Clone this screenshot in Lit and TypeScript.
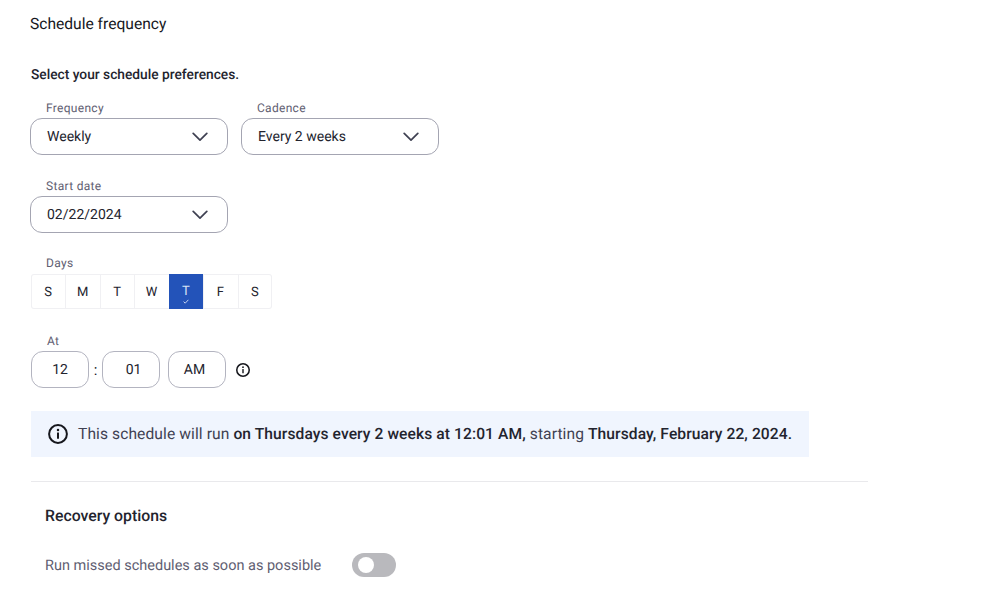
import { LitElement, html, css } from "lit";
import { customElement } from "lit/decorators.js";

const chevron = html`<svg class="chev" width="16" height="10" viewBox="0 0 16 10"><path d="M1.2 1.4 8 8.2l6.8-6.8" fill="none" stroke="#3f4152" stroke-width="1.7" stroke-linecap="round" stroke-linejoin="round"/></svg>`;
const info = (s: number, w: number) => html`<svg width=${s} height=${s} viewBox="0 0 20 20"><circle cx="10" cy="10" r="8.9" fill="none" stroke="#16171d" stroke-width=${w}/><circle cx="10" cy="5.9" r="1.25" fill="#16171d"/><rect x="9" y="8.4" width="2" height="6.4" rx=".4" fill="#16171d"/></svg>`;

@customElement("app-root")
export class AppRoot extends LitElement {
  static styles = css`
    :host { display: block; width: 987px; height: 600px; overflow: hidden; background: #fff; font-family: Roboto, "Liberation Sans", sans-serif; color: #16171d; box-sizing: border-box; padding: 14px 0 0 30px; text-rendering: geometricPrecision; }
    h2 { margin: 0; font-size: 15.6px; font-weight: 400; line-height: 20px; }
    .intro { margin: 31px 0 0 1px; font-size: 13.75px; font-weight: 500; line-height: 20px; color: #23242e; }
    .row { display: flex; gap: 13px; margin-top: 16px; }
    .row.second { margin-top: 24px; }
    .lab { font-size: 12px; line-height: 15px; color: #5f6072; letter-spacing: .3px; margin: 0 0 2px 16px; }
    .select { width: 198px; height: 37px; box-sizing: border-box; border: 1px solid #a4a5b2; border-radius: 12px; display: flex; align-items: center; justify-content: space-between; padding: 0 19px 0 16px; font-size: 14px; color: #23242e; }
    .days-lab { margin: 23px 0 4px 16px; }
    .days { display: flex; margin-left: 1px; margin-top: -1px; width: 241px; height: 35px; box-sizing: border-box; box-shadow: inset 0 0 0 1px #f0f0f3; border-radius: 3px; }
    .day { flex: 1; min-width: 0; display: flex; align-items: center; justify-content: center; position: relative; font-size: 13px; padding-top: 1px; box-sizing: border-box; box-shadow: inset 1px 0 0 #f0f0f3; color: #23242e; }
    .day:first-child { box-shadow: none; }
    .day.on { background: #2353b9; color: #d8e2f5; box-shadow: none; padding-top: 0; padding-bottom: 1px; }
    .day svg { position: absolute; left: 50%; bottom: 5px; margin-left: -3px; }
    .at-lab { margin: 25px 0 2px 17px; }
    .time { display: flex; align-items: center; margin-left: 1px; }
    .box { width: 58px; height: 37px; box-sizing: border-box; border: 1.5px solid #b3b4c0; border-radius: 12px; display: flex; align-items: center; justify-content: center; font-size: 14px; color: #23242e; }
    .box.right { padding-left: 5px; }
    .box.left { padding-right: 5px; }
    .colon { width: 13px; text-align: center; font-size: 15px; }
    .gap { width: 8px; }
    .tip { display: flex; margin-left: 10px; }
    .banner { display: flex; align-items: center; gap: 10px; margin: 23px 0 0 1px; width: 778px; height: 46px; box-sizing: border-box; padding-left: 17px; background: #f0f5fe; font-size: 15.6px; letter-spacing: .09px; color: #3f4152; white-space: nowrap; }
    .banner b { font-weight: 500; color: #23242e; }
    hr { margin: 24px 0 0 1px; width: 837px; height: 1px; border: 0; background: #e9e9ec; }
    h3 { margin: 24px 0 0 15px; font-size: 15.8px; font-weight: 500; line-height: 20px; color: #23242e; }
    .opt { display: flex; align-items: center; margin: 27px 0 0 15px; font-size: 14.5px; color: #5f6072; height: 24px; }
    .opt span { width: 307px; }
    .toggle { width: 44px; height: 24px; border-radius: 12px; background: #b9b9bd; display: flex; align-items: center; padding-left: 6px; box-sizing: border-box; }
    .knob { width: 16px; height: 16px; border-radius: 50%; background: #fff; }
  `;

  render() {
    const days = ["S", "M", "T", "W", "T", "F", "S"];
    return html`
      <h2>Schedule frequency</h2>
      <p class="intro">Select your schedule preferences.</p>
      <div class="row">
        <div><div class="lab">Frequency</div><div class="select">Weekly ${chevron}</div></div>
        <div><div class="lab">Cadence</div><div class="select">Every 2 weeks ${chevron}</div></div>
      </div>
      <div class="row second">
        <div><div class="lab">Start date</div><div class="select">02/22/2024 ${chevron}</div></div>
      </div>
      <div class="lab days-lab">Days</div>
      <div class="days">
        ${days.map((d, i) => html`<div class="day ${i === 4 ? "on" : ""}">${d}${i === 4 ? html`<svg width="6" height="5" viewBox="0 0 6 5"><path d="M.6 2.6 2.2 4.2 5.4.8" fill="none" stroke="#d8e2f5" stroke-width=".9"/></svg>` : ""}</div>`)}
      </div>
      <div class="lab at-lab">At</div>
      <div class="time">
        <div class="box">12</div><div class="colon">:</div><div class="box right">01</div><div class="gap"></div><div class="box left">AM</div>
        <div class="tip">${info(14, 2.2)}</div>
      </div>
      <div class="banner">${info(20, 2)}<div>This schedule will run <b>on Thursdays every 2 weeks at 12:01 AM,</b> starting <b>Thursday, February 22, 2024.</b></div></div>
      <hr />
      <h3>Recovery options</h3>
      <div class="opt"><span>Run missed schedules as soon as possible</span><div class="toggle"><div class="knob"></div></div></div>
    `;
  }
}
